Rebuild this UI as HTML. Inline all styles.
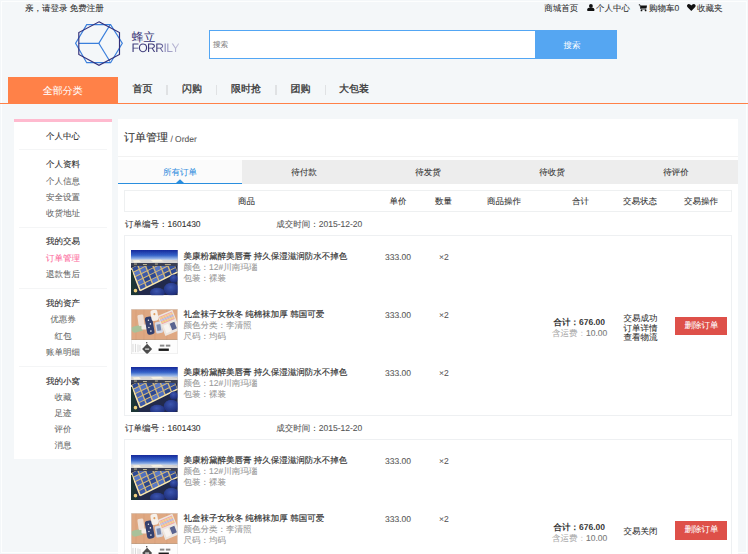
<!DOCTYPE html>
<html><head><meta charset="utf-8">
<style>
*{margin:0;padding:0;box-sizing:border-box}
html,body{text-rendering:geometricPrecision;-webkit-text-stroke-width:0.08px;width:748px;height:554px;overflow:hidden;background:#f4f7f9;font-family:"Liberation Sans",sans-serif;color:#333}
.a{position:absolute;white-space:nowrap;line-height:1}
.t{font-size:8.5px}
i{font-style:normal;font-size:8.5px}
.it{position:absolute;left:14px;width:98px;text-align:center;font-size:8.5px;line-height:1;color:#666;white-space:nowrap;-webkit-text-stroke-width:0.05px}
.it.hd{-webkit-text-stroke-width:0.12px}
.hd{color:#333}
.dv{position:absolute;left:19px;width:88px;height:1px;background:#f4f5f6}
.tab{position:absolute;top:159.5px;height:24px;width:124px;text-align:center;font-size:8.5px;line-height:25px;color:#333}
.th{position:absolute;top:197px;font-size:8.5px;line-height:1;color:#333;white-space:nowrap}
.blk{position:absolute;left:124px;width:607.5px;border:1px solid #eef0f2;background:#fff}
.img{position:absolute;left:131px;width:46.8px;height:45.2px;overflow:hidden}
.gr{color:#999}
.btn{position:absolute;left:675px;width:52.2px;height:18.5px;background:#de5049;color:#fff;font-size:8.5px;line-height:17.5px;padding-left:1px;-webkit-text-stroke-width:0.05px;text-align:center}
.sep{position:absolute;top:85px;width:1.3px;height:9.8px;background:#e0e2e4}
</style></head><body>
<svg width="0" height="0" style="position:absolute">
<defs>
<filter id="blr" x="-5%" y="-5%" width="110%" height="110%"><feGaussianBlur stdDeviation="0.3"/></filter>
<clipPath id="hz"><rect x="0" y="15.5" width="47" height="30"/></clipPath>
<linearGradient id="skyG" x1="0" y1="0" x2="0" y2="1"><stop offset="0" stop-color="#17289a"/><stop offset="0.5" stop-color="#3462c8"/><stop offset="0.85" stop-color="#9ab8e8"/><stop offset="1" stop-color="#d8dce4"/></linearGradient>
<radialGradient id="domeG" cx="0.45" cy="0.35" r="0.75"><stop offset="0" stop-color="#3c56b0"/><stop offset="1" stop-color="#18246c"/></radialGradient>
<symbol id="city" viewBox="0 0 47 45" preserveAspectRatio="none">
<g filter="url(#blr)">
<rect width="47" height="45" fill="#222a4c"/>
<g clip-path="url(#hz)">
<path d="M9.2 40.5 L46.8 22.0 L37.8 -0.5 L0.2 18.0Z" fill="#d4b878"/>
<path d="M9.8 39.5 L14.8 37.0 L13.4 33.4 L8.3 35.9Z" fill="#3e5aa8"/><path d="M8.0 35.0 L13.0 32.5 L11.6 28.9 L6.5 31.4Z" fill="#5070c0"/><path d="M6.2 30.5 L11.2 28.0 L9.8 24.4 L4.7 26.9Z" fill="#4864b0"/><path d="M4.4 26.0 L9.4 23.5 L8.0 19.9 L2.9 22.4Z" fill="#5a78c4"/><path d="M2.6 21.5 L7.6 19.0 L6.2 15.4 L1.1 17.9Z" fill="#2f4a94"/><path d="M16.0 36.4 L21.1 33.9 L19.6 30.3 L14.6 32.8Z" fill="#36529e"/><path d="M14.2 31.9 L19.3 29.4 L17.8 25.8 L12.8 28.3Z" fill="#2c4488"/><path d="M12.4 27.4 L17.5 24.9 L16.0 21.3 L11.0 23.8Z" fill="#3e5aa8"/><path d="M10.6 22.9 L15.7 20.4 L14.2 16.8 L9.2 19.3Z" fill="#5070c0"/><path d="M8.8 18.4 L13.9 15.9 L12.4 12.3 L7.4 14.8Z" fill="#4864b0"/><path d="M22.3 33.3 L27.4 30.9 L25.9 27.2 L20.9 29.7Z" fill="#5a78c4"/><path d="M20.5 28.8 L25.6 26.4 L24.1 22.7 L19.1 25.2Z" fill="#2f4a94"/><path d="M18.7 24.3 L23.8 21.9 L22.3 18.2 L17.3 20.7Z" fill="#36529e"/><path d="M16.9 19.8 L22.0 17.4 L20.5 13.7 L15.5 16.2Z" fill="#2c4488"/><path d="M15.1 15.3 L20.2 12.9 L18.7 9.2 L13.7 11.7Z" fill="#3e5aa8"/><path d="M28.6 30.3 L33.6 27.8 L32.2 24.2 L27.1 26.6Z" fill="#5070c0"/><path d="M26.8 25.8 L31.8 23.3 L30.4 19.7 L25.3 22.1Z" fill="#4864b0"/><path d="M25.0 21.3 L30.0 18.8 L28.6 15.2 L23.5 17.6Z" fill="#5a78c4"/><path d="M23.2 16.8 L28.2 14.3 L26.8 10.7 L21.7 13.1Z" fill="#2f4a94"/><path d="M21.4 12.3 L26.4 9.8 L25.0 6.2 L19.9 8.6Z" fill="#36529e"/><path d="M34.8 27.2 L39.9 24.7 L38.4 21.1 L33.4 23.6Z" fill="#2c4488"/><path d="M33.0 22.7 L38.1 20.2 L36.6 16.6 L31.6 19.1Z" fill="#3e5aa8"/><path d="M31.2 18.2 L36.3 15.7 L34.8 12.1 L29.8 14.6Z" fill="#5070c0"/><path d="M29.4 13.7 L34.5 11.2 L33.0 7.6 L28.0 10.1Z" fill="#4864b0"/><path d="M27.6 9.2 L32.7 6.7 L31.2 3.1 L26.2 5.6Z" fill="#5a78c4"/><path d="M41.1 24.1 L46.2 21.6 L44.7 18.0 L39.7 20.5Z" fill="#2f4a94"/><path d="M39.3 19.6 L44.4 17.1 L42.9 13.5 L37.9 16.0Z" fill="#36529e"/><path d="M37.5 15.1 L42.6 12.6 L41.1 9.0 L36.1 11.5Z" fill="#2c4488"/><path d="M35.7 10.6 L40.8 8.1 L39.3 4.5 L34.3 7.0Z" fill="#3e5aa8"/><path d="M33.9 6.1 L39.0 3.6 L37.5 -0.0 L32.5 2.5Z" fill="#5070c0"/>
<path d="M9.2 40.5 L0.2 18.0 M9.2 40.5 L46.8 22.0" stroke="#f8e8b0" stroke-width="1.3"/>
</g>
<rect width="47" height="10.5" fill="url(#skyG)"/>
<path d="M0 9.8 Q23 8.8 47 10.2 L47 13.2 L0 13.2Z" fill="#d8d6d4"/>
<path d="M2 10.5 L8 10 L10 12 L3 12.5Z M20 10 L30 9.6 L33 11.5 L22 12Z" fill="#f6f0e0"/>
<path d="M0 13 L47 13 L47 16 L0 16Z" fill="#3a4052"/>
<path d="M3 14 L6 14 M12 14.5 L16 14.5 M24 14 L27 14 M34 14.6 L40 14.6" stroke="#e8d8a8" stroke-width="0.8"/>
<path d="M0 20 L1 20 L8 45 L0 45Z" fill="#1e3434"/>
<circle cx="4.5" cy="40.5" r="1.8" fill="#f0d080"/>
<ellipse cx="40.5" cy="39" rx="7.5" ry="6.5" fill="url(#domeG)"/>
<ellipse cx="26.5" cy="42.5" rx="7.5" ry="5" fill="url(#domeG)"/>
<ellipse cx="43" cy="28.5" rx="4.3" ry="4" fill="url(#domeG)"/>
</g>
</symbol>
<symbol id="socks" viewBox="0 0 47 44" preserveAspectRatio="none">
<rect width="47" height="44" fill="#fdfdfd"/>
<rect width="47" height="29.8" fill="#dfa882"/>
<path d="M5 0 L5 30 M13 0 L13 30 M24 0 L24 30 M36 0 L36 30" stroke="#d8a07a" stroke-width="0.8"/>
<rect x="0" y="29.4" width="47" height="0.7" fill="#b89070"/>
<path d="M0.5 18 Q0 23 4 23 L12 21 L12 15.5 Q5 15.5 0.5 18Z" fill="#a9c19a"/>
<rect x="7" y="5.5" width="6" height="11" rx="1.5" fill="#efe0d6" transform="rotate(-8 10 11)"/>
<rect x="10.5" y="15" width="5.5" height="5" rx="1" fill="#f4ece4"/>
<rect x="15" y="7.5" width="7.5" height="17.5" rx="2.5" fill="#34406e" transform="rotate(-10 18.7 16)"/>
<circle cx="17.5" cy="11" r="0.7" fill="#f0f0f0"/><circle cx="19.5" cy="14.5" r="0.8" fill="#f0f0f0"/><circle cx="18" cy="18" r="0.7" fill="#f0f0f0"/><circle cx="20" cy="21.5" r="0.8" fill="#f0f0f0"/>
<rect x="20" y="1" width="7" height="10.5" rx="2" fill="#f5f0ea" transform="rotate(-10 23.5 6)"/>
<circle cx="23.5" cy="5" r="1" fill="#e0a060"/>
<rect x="24.5" y="12.5" width="7" height="11" rx="1.5" fill="#d6dae6" transform="rotate(-10 28 18)"/>
<rect x="26" y="15" width="4" height="6" fill="#7c8cb0" transform="rotate(-10 28 18)"/>
<g transform="rotate(-22 38 13.5)">
<rect x="30" y="3" width="16" height="21" fill="#ece6e0"/>
<path d="M31 5 L45 5 M31 7.2 L45 7.2 M31 9.4 L45 9.4 M31 11.6 L45 11.6" stroke="#f0a8a8" stroke-width="1.1"/>
<path d="M31 6.1 L45 6.1 M31 10.5 L45 10.5" stroke="#f2d070" stroke-width="0.9"/>
<path d="M31 8.3 L45 8.3" stroke="#9ec0e0" stroke-width="0.9"/>
<rect x="32" y="14" width="5" height="8" fill="#f8f4f0"/><rect x="38.5" y="14.5" width="5" height="7" fill="#5a6490"/>
</g>
<path d="M2 34 L2 42 M4.5 34 L4.5 42 M7 34.5 L7 42 M9 35 L9 41" stroke="#c4c4c4" stroke-width="0.6"/>
<path d="M16.2 33.8 L21.2 39 L16.2 44.1 L11.2 39Z" fill="#4c4c4c"/>
<rect x="14.2" y="38.4" width="4" height="1.3" fill="#d8d8d8"/>
<circle cx="15.8" cy="32.8" r="0.7" fill="#333"/>
<rect x="29" y="34.7" width="4.5" height="1.9" fill="#888"/><rect x="35" y="34.7" width="4.5" height="1.9" fill="#888"/>
<rect x="27.7" y="38.5" width="10.3" height="2.3" fill="#1a1a1a"/>
<rect x="0.25" y="0.25" width="46.5" height="43.5" fill="none" stroke="#d8d8d8" stroke-width="0.5"/>
</symbol>
</defs></svg>
<div class="a" style="left:1px;top:1px;width:746px;height:552px;border:1px solid rgba(255,255,255,0.8)"></div>
<div class="a t" style="left:25px;top:4px">亲，请登录 免费注册</div>
<div class="a t" style="left:544.2px;top:4px">商城首页</div>
<div class="a t" style="left:596px;top:4px">个人中心</div>
<div class="a t" style="left:649px;top:4px">购物车<i>0</i></div>
<div class="a t" style="left:697px;top:4px">收藏夹</div>
<svg class="a" style="left:584px;top:2px" width="120" height="12" viewBox="584 2 120 12">
<circle cx="590.9" cy="6" r="1.9" fill="#111"/>
<path d="M587.3 11.1 L587.3 9.3 Q587.3 7.8 589 7.8 L592.6 7.8 Q594.3 7.8 594.3 9.3 L594.3 11.1Z" fill="#111"/>
<path d="M638.8 4.8 L640 4.8 L640.9 9 L646.2 9" fill="none" stroke="#111" stroke-width="0.9"/>
<path d="M640.6 5.6 L647 5.6 L646.5 8.3 L641.1 8.3Z" fill="#111"/>
<circle cx="641.5" cy="10.4" r="0.9" fill="#111"/><circle cx="645.6" cy="10.4" r="0.9" fill="#111"/>
<path d="M691.3 11.1 L687.6 7.3 Q686.4 5.9 687.2 4.9 Q688.5 3.5 690.2 4.6 L691.3 5.5 L692.4 4.6 Q694.1 3.5 695.4 4.9 Q696.2 5.9 695 7.3Z" fill="#111"/>
</svg>
<svg class="a" style="left:0;top:0" width="200" height="80" viewBox="0 0 200 80">
 <polygon points="75.6,43.3 86.7,24.6 110.6,24.6 122.3,43.3 110.6,62.7 86.7,62.7" fill="none" stroke="#3a7fdc" stroke-width="1.2"/>
 <polyline points="78.8,43.3 98.8,43.3 110,25" fill="none" stroke="#3a7fdc" stroke-width="1.2"/>
 <line x1="98.8" y1="43.3" x2="110" y2="61.5" stroke="#3a7fdc" stroke-width="1.2"/>
 <polygon points="99,21.8 119.5,32.5 119.5,54.5 99,65.3 78.8,54.5 78.8,32.5" fill="none" stroke="#33307a" stroke-width="1.15"/>
</svg>
<div class="a" style="left:131.8px;top:32.2px;font-size:11.8px;color:#3b3878;-webkit-text-stroke-width:0">蜂立</div>
<div class="a" style="left:131.4px;top:42.4px;font-size:12.2px;letter-spacing:-0.6px;-webkit-text-stroke-width:0;background:linear-gradient(90deg,#3b3878 0%,#3b3878 58%,#8a88b8 70%,#c4c2da 100%);-webkit-background-clip:text;background-clip:text;color:transparent">FORRILY</div>
<div class="a" style="left:209px;top:30px;width:326.5px;height:29px;border:1px solid #52a6f4;background:#fff"></div>
<div class="a" style="left:213px;top:41px;font-size:7.6px;color:#888">搜索</div>
<div class="a" style="left:535px;top:30px;width:81.5px;height:28.5px;background:#55a6f2;color:#fff;font-size:8.5px;line-height:30.5px;padding-right:7.5px;text-align:center;-webkit-text-stroke-width:0">搜索</div>
<div class="a" style="left:0;top:102.8px;width:748px;height:1.4px;background:#ff8148"></div>
<div class="a" style="left:8px;top:76.7px;width:109.7px;height:26.5px;background:#ff8148;color:#fff;font-size:10px;line-height:29px;-webkit-text-stroke-width:0.05px;text-align:center">全部分类</div>
<div class="a" style="left:132.5px;top:85.2px;font-size:10px;-webkit-text-stroke-width:0.28px">首页</div>
<div class="a" style="left:182px;top:85.2px;font-size:10px;-webkit-text-stroke-width:0.28px">闪购</div>
<div class="a" style="left:231px;top:85.2px;font-size:10px;-webkit-text-stroke-width:0.28px">限时抢</div>
<div class="a" style="left:290.5px;top:85.2px;font-size:10px;-webkit-text-stroke-width:0.28px">团购</div>
<div class="a" style="left:339px;top:85.2px;font-size:10px;-webkit-text-stroke-width:0.28px">大包装</div>
<div class="sep" style="left:166.3px"></div>
<div class="sep" style="left:215.7px"></div>
<div class="sep" style="left:275.3px"></div>
<div class="sep" style="left:324.5px"></div>
<div class="a" style="left:14.2px;top:119.2px;width:97.4px;height:340.3px;background:#fff;border-top:3px solid #ffbacf"></div>
<div class="it hd" style="top:131.5px">个人中心</div>
<div class="dv" style="top:149.4px"></div>
<div class="it hd" style="top:160px">个人资料</div>
<div class="it " style="top:176.5px">个人信息</div>
<div class="it " style="top:192.5px">安全设置</div>
<div class="it " style="top:208.5px">收货地址</div>
<div class="dv" style="top:227px"></div>
<div class="it hd" style="top:237px">我的交易</div>
<div class="it" style="top:253.5px;color:#fd6a9c">订单管理</div>
<div class="it " style="top:269.5px">退款售后</div>
<div class="dv" style="top:288px"></div>
<div class="it hd" style="top:299px">我的资产</div>
<div class="it " style="top:315px">优惠券</div>
<div class="it " style="top:331.5px">红包</div>
<div class="it " style="top:347.5px">账单明细</div>
<div class="dv" style="top:365.5px"></div>
<div class="it hd" style="top:376.5px">我的小窝</div>
<div class="it " style="top:392.5px">收藏</div>
<div class="it " style="top:409px">足迹</div>
<div class="it " style="top:425px">评价</div>
<div class="it " style="top:441px">消息</div>
<div class="a" style="left:118px;top:118.6px;width:620px;height:440px;background:#fff"></div>
<div class="a" style="left:124px;top:133.2px;font-size:11px;-webkit-text-stroke-width:0.12px">订单管理</div>
<div class="a" style="left:170.4px;top:134.8px;font-size:8.5px;color:#5a5a5a">/ Order</div>
<div class="a" style="left:118px;top:155.8px;width:620px;height:1px;background:#f2f2f2"></div>
<div class="a" style="left:242px;top:159.5px;width:496px;height:24px;background:#ededed"></div>
<div class="a" style="left:118px;top:159.5px;width:124px;height:24px;background:#fbfbfb"></div>
<div class="tab" style="left:118px;color:#3490e0">所有订单</div>
<div class="tab" style="left:242px">待付款</div>
<div class="tab" style="left:366px">待发货</div>
<div class="tab" style="left:490px">待收货</div>
<div class="tab" style="left:614px">待评价</div>
<div class="a" style="left:118px;top:182.6px;width:124px;height:1.4px;background:#2a8ede"></div>
<svg class="a" style="left:175px;top:179px" width="10" height="4"><path d="M1 4 L5 0.3 L9 4Z" fill="#2a8ede"/></svg>
<div class="a" style="left:124px;top:189.8px;width:607.5px;height:22px;border:1px solid #eef0f1"></div>
<div class="th" style="left:238px">商品</div>
<div class="th" style="left:389.5px">单价</div>
<div class="th" style="left:435px">数量</div>
<div class="th" style="left:487px">商品操作</div>
<div class="th" style="left:572px">合计</div>
<div class="th" style="left:623px">交易状态</div>
<div class="th" style="left:684px">交易操作</div>
<div class="a t" style="left:125px;top:219.8px">订单编号：<i>1601430</i></div>
<div class="a t" style="left:276.3px;top:219.8px;color:#555">成交时间：<i>2015-12-20</i></div>
<div class="blk" style="top:234.8px;height:181.5px"></div>
<svg class="img" style="top:250.4px"><use href="#city" width="46.8" height="45.2"/></svg>
<div class="a t" style="left:183.5px;top:252.0px;-webkit-text-stroke-width:0.16px">美康粉黛醉美唇膏 持久保湿滋润防水不掉色</div>
<div class="a t gr" style="left:183.5px;top:263.0px">颜色：<i>12#</i>川南玛瑙</div>
<div class="a t gr" style="left:183.5px;top:274.0px">包装：裸装</div>
<div class="a t" style="left:385px;top:252.8px;color:#555"><i>333.00</i></div>
<div class="a t" style="left:439px;top:252.8px;color:#555"><i>×2</i></div>
<svg class="img" style="top:308.6px"><use href="#socks" width="46.8" height="45.2"/></svg>
<div class="a t" style="left:183.5px;top:310.2px;-webkit-text-stroke-width:0.16px">礼盒袜子女秋冬 纯棉袜加厚 韩国可爱</div>
<div class="a t gr" style="left:183.5px;top:321.2px">颜色分类：李清照</div>
<div class="a t gr" style="left:183.5px;top:332.2px">尺码：均码</div>
<div class="a t" style="left:385px;top:311.0px;color:#555"><i>333.00</i></div>
<div class="a t" style="left:439px;top:311.0px;color:#555"><i>×2</i></div>
<svg class="img" style="top:366.8px"><use href="#city" width="46.8" height="45.2"/></svg>
<div class="a t" style="left:183.5px;top:368.4px;-webkit-text-stroke-width:0.16px">美康粉黛醉美唇膏 持久保湿滋润防水不掉色</div>
<div class="a t gr" style="left:183.5px;top:379.4px">颜色：<i>12#</i>川南玛瑙</div>
<div class="a t gr" style="left:183.5px;top:390.4px">包装：裸装</div>
<div class="a t" style="left:385px;top:369.2px;color:#555"><i>333.00</i></div>
<div class="a t" style="left:439px;top:369.2px;color:#555"><i>×2</i></div>
<div class="a t" style="left:553.5px;top:318px;font-weight:bold;-webkit-text-stroke-width:0">合计：<i>676.00</i></div>
<div class="a t" style="left:552px;top:328.6px;color:#aaa">含运费<span style="color:#ccc">：</span><i style="color:#777">10.00</i></div>
<div class="a t" style="left:623.5px;top:314.2px">交易成功</div>
<div class="a t" style="left:623.5px;top:323.7px">订单详情</div>
<div class="a t" style="left:623.5px;top:333.2px">查看物流</div>
<div class="btn" style="top:316.5px">删除订单</div>
<div class="a t" style="left:125px;top:424.3px">订单编号：<i>1601430</i></div>
<div class="a t" style="left:276.3px;top:424.3px;color:#555">成交时间：<i>2015-12-20</i></div>
<div class="blk" style="top:439.3px;height:200px"></div>
<svg class="img" style="top:454.6px"><use href="#city" width="46.8" height="45.2"/></svg>
<div class="a t" style="left:183.5px;top:456.2px;-webkit-text-stroke-width:0.16px">美康粉黛醉美唇膏 持久保湿滋润防水不掉色</div>
<div class="a t gr" style="left:183.5px;top:467.2px">颜色：<i>12#</i>川南玛瑙</div>
<div class="a t gr" style="left:183.5px;top:478.2px">包装：裸装</div>
<div class="a t" style="left:385px;top:457.0px;color:#555"><i>333.00</i></div>
<div class="a t" style="left:439px;top:457.0px;color:#555"><i>×2</i></div>
<svg class="img" style="top:512.8px"><use href="#socks" width="46.8" height="45.2"/></svg>
<div class="a t" style="left:183.5px;top:514.4px;-webkit-text-stroke-width:0.16px">礼盒袜子女秋冬 纯棉袜加厚 韩国可爱</div>
<div class="a t gr" style="left:183.5px;top:525.4px">颜色分类：李清照</div>
<div class="a t gr" style="left:183.5px;top:536.4px">尺码：均码</div>
<div class="a t" style="left:385px;top:515.2px;color:#555"><i>333.00</i></div>
<div class="a t" style="left:439px;top:515.2px;color:#555"><i>×2</i></div>
<div class="a t" style="left:553.5px;top:523.2px;font-weight:bold;-webkit-text-stroke-width:0">合计：<i>676.00</i></div>
<div class="a t" style="left:552px;top:533.8000000000001px;color:#aaa">含运费<span style="color:#ccc">：</span><i style="color:#777">10.00</i></div>
<div class="a t" style="left:623.5px;top:527.0px">交易关闭</div>
<div class="btn" style="top:521.4px">删除订单</div>
</body></html>
